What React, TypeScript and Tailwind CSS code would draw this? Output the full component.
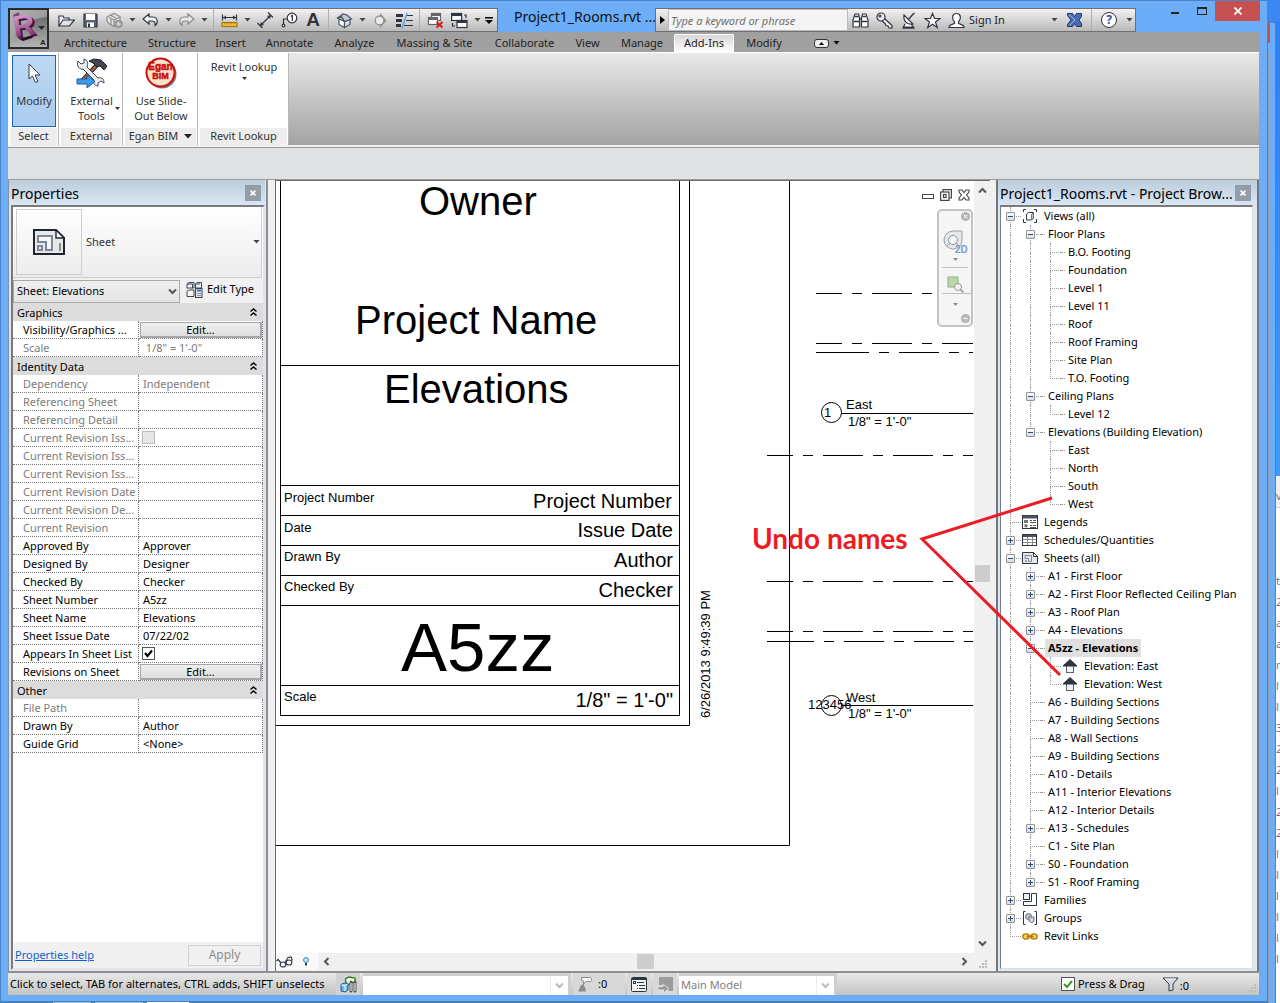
import type { ReactNode } from "react";

/* ---------- small shared parts ---------- */

function Caret({ dark = false }: { dark?: boolean }) {
  return (
    <svg width="7" height="4" viewBox="0 0 7 4" aria-hidden="true">
      <path d="M0.5 0h6L3.5 3.6z" fill={dark ? "#000" : "#444"} />
    </svg>
  );
}

function Chevron({ color = "#555", rotate = 0 }: { color?: string; rotate?: number }) {
  return (
    <svg width="9" height="9" viewBox="0 0 9 9" fill="none" stroke={color} strokeWidth="2" aria-hidden="true">
      <path d="M1 2.5l3.5 3.5L8 2.5" transform={`rotate(${rotate} 4.5 4.5)`} />
    </svg>
  );
}

function TinyArrow({ color = "#333" }: { color?: string }) {
  return (
    <svg width="5" height="3" viewBox="0 0 5 3" aria-hidden="true">
      <path d="M0 0h5L2.500 3z" fill={color} />
    </svg>
  );
}

function ToolButton({ label, children, wide = true }: { label: string; children: ReactNode; wide?: boolean }) {
  return (
    <button aria-label={label} className={wide ? "flex h-full w-6 items-center justify-center" : "flex h-full w-3 items-center justify-center"}>
      {children}
    </button>
  );
}

function MenuArrow({ label }: { label: string }) {
  return (
    <ToolButton label={label} wide={false}>
      <Caret />
    </ToolButton>
  );
}

function Separator() {
  return <span className="mx-[3px] h-full w-px bg-[#aeaeae]" />;
}

function Icon({ children, size = 17 }: { children: ReactNode; size?: number }) {
  return (
    <svg width={size} height={size} viewBox="0 0 17 17" fill="none" stroke="#2e3440" strokeWidth="1.2" aria-hidden="true">
      {children}
    </svg>
  );
}

function SheetIcon({ size }: { size: number }) {
  return (
    <svg width={size} height={(size * 26) / 32} viewBox="0 0 32 26" fill="none" aria-hidden="true">
      <path d="M1 1h22l8 8v16H1z" fill="#e6e8ea" stroke="#1f2530" strokeWidth="2" />
      <path d="M23 1v8h8z" fill="#fff" stroke="#1f2530" strokeWidth="1.4" />
      <path d="M5 7h14v14h-6v-8H5z" fill="#f4f6f8" stroke="#7c879c" strokeWidth="2" />
      <rect x="5" y="17" width="4" height="4" fill="#f4f6f8" stroke="#7c879c" strokeWidth="2" />
      <path d="M27 14v8" stroke="#8c8c8c" strokeWidth="2" />
    </svg>
  );
}

function PaneClose({ label }: { label: string }) {
  return (
    <button aria-label={label} className="flex h-4 w-4 items-center justify-center bg-[#929da8]">
      <svg width="6" height="6" viewBox="0 0 6 6" stroke="#fff" strokeWidth="1.6" aria-hidden="true">
        <path d="M0.5 0.5l5 5M5.5 0.5l-5 5" />
      </svg>
    </button>
  );
}

/* ---------- title bar ---------- */

function QuickAccess() {
  return (
    <div className="flex h-6 items-stretch border-y border-r border-[#6f6f6f] bg-linear-to-b from-[#f2f2f2] to-[#b9b9b9] pr-[2px] pl-[46px]">
      <ToolButton label="Open">
        <Icon>
          <path d="M1 14V4h4l1 2h5v3" fill="#fff" />
          <path d="M1 14l4-6h11.500l-5 6z" fill="#dfe3e8" />
        </Icon>
      </ToolButton>
      <ToolButton label="Save">
        <Icon>
          <path d="M2 2h12.500l.5.5V15H2z" fill="#5c6475" />
          <rect x="4" y="2" width="9" height="6" fill="#fff" stroke="none" />
          <rect x="5" y="10.500" width="7" height="4.500" fill="#fff" stroke="none" />
          <rect x="6" y="11.500" width="2" height="3.500" fill="#2e3440" stroke="none" />
        </Icon>
      </ToolButton>
      <ToolButton label="Synchronize">
        <Icon>
          <g stroke="#8e8e8e">
            <path d="M1 5l4-2 3-1.500 6 3v6l-6 4-5-3-2-2z" fill="#e4e4e4" />
            <path d="M8 15V8l6-3M8 8L3 5.500M4 3l6 3M5 13V7" />
            <circle cx="12.500" cy="12" r="3.500" fill="#a4a4a4" />
            <path d="M10.500 12h4M12.500 10v4" stroke="#e0e0e0" />
          </g>
        </Icon>
      </ToolButton>
      <MenuArrow label="Synchronize options" />
      <ToolButton label="Undo">
        <Icon>
          <path d="M7 2L1 7l6 5V9h3c2.500 0 3.500 1.500 3 4.500 3-1.500 3.500-8-2-8.500H7z" fill="#fff" />
        </Icon>
      </ToolButton>
      <MenuArrow label="Undo history" />
      <ToolButton label="Redo">
        <Icon>
          <path d="M10 2l6 5-6 5V9H7c-2.500 0-3.500 1.500-3 4.500C1 12 .5 5.500 6 5h4z" fill="#e8e8e8" stroke="#8a8a8a" />
        </Icon>
      </ToolButton>
      <MenuArrow label="Redo history" />
      <Separator />
      <ToolButton label="Measure">
        <Icon>
          <path d="M1.500 2.500v6M15.500 2.500v6M2 5.500h13" />
          <path d="M2 5.500l3-2v4zM15 5.500l-3-2v4z" fill="#2e3440" stroke="none" />
          <rect x="1" y="10.500" width="15" height="4" fill="#f5c242" stroke="#a87408" />
          <path d="M4 11v1.500M7 11v1.500M10 11v1.500M13 11v1.500" stroke="#a87408" strokeWidth="1" />
        </Icon>
      </ToolButton>
      <MenuArrow label="Measure options" />
      <ToolButton label="Aligned Dimension">
        <Icon>
          <path d="M3 14L14 3M0.500 11l5 5M11 .5l5 5" />
          <path d="M3 14l1-4 3 3zM14 3l-1 4-3-3z" fill="#2e3440" stroke="none" />
        </Icon>
      </ToolButton>
      <ToolButton label="Tag by Category">
        <Icon>
          <circle cx="11" cy="6" r="4.800" fill="#fff" />
          <path d="M11.300 9V3.500L9.800 4.600M6 7H2.500v6" />
          <circle cx="2.500" cy="13.500" r="1.300" fill="#fff" />
        </Icon>
      </ToolButton>
      <ToolButton label="Text">
        <span className="font-['Liberation_Sans',sans-serif] text-[19px] leading-5 font-bold text-[#343434]">A</span>
      </ToolButton>
      <Separator />
      <ToolButton label="Default 3D View">
        <Icon>
          <path d="M3 7v5.500l5.500 3V9.500z" fill="#fff" stroke="#4b5363" />
          <path d="M8.500 9.500v6l5.500-3V7z" fill="#d9dde2" stroke="#4b5363" />
          <path d="M1 6.500l6-4.500 4 1 4.500 4-7 2.500L5.500 5z" fill="#c3c8d0" stroke="#4b5363" />
          <path d="M1 6.500L5.500 5l3 4.500" stroke="#4b5363" />
        </Icon>
      </ToolButton>
      <MenuArrow label="3D view options" />
      <ToolButton label="Section">
        <Icon>
          <path d="M8 1l6.500 7.500L8 16z" fill="#8e8e8e" stroke="none" />
          <circle cx="7.500" cy="8.500" r="4.300" fill="#e8e8e8" stroke="#8e8e8e" />
        </Icon>
      </ToolButton>
      <ToolButton label="Thin Lines">
        <Icon>
          <path d="M0 3.500h7M0 8.500h6M0 13.500h5" strokeWidth="3" />
          <path d="M11 3.500h6M10 8.500h7M8 13.500h9" strokeWidth="1" />
          <path d="M11 1L6 16" stroke="#3b9bf0" />
        </Icon>
      </ToolButton>
      <Separator />
      <ToolButton label="Close Hidden Windows">
        <Icon>
          <g fill="#fff" stroke="#666">
            <rect x="4.500" y="1.500" width="9" height="7" />
            <rect x="1.500" y="5.500" width="9" height="7" />
            <path d="M2 7h8M5 3h8" strokeWidth="2" />
          </g>
          <path d="M9.500 10l6 5.500M15.500 10l-6 5.500" stroke="#cc1f1f" strokeWidth="2" />
        </Icon>
      </ToolButton>
      <ToolButton label="Switch Windows">
        <Icon>
          <g fill="#fff">
            <rect x=".6" y="1.500" width="10" height="7" />
            <rect x="6" y="8.500" width="10" height="7" />
            <path d="M1 3h9M6 10h10" strokeWidth="2" />
          </g>
          <path d="M13 3h2v3M1.500 11v3h2.500" />
        </Icon>
      </ToolButton>
      <MenuArrow label="Switch window list" />
      <ToolButton label="Customize Quick Access Toolbar" wide={false}>
        <svg width="8" height="7" viewBox="0 0 8 7" aria-hidden="true">
          <path d="M0 0h8v1.500H0zM0 3h8L4 7z" />
        </svg>
      </ToolButton>
    </div>
  );
}

function InfoCenter() {
  return (
    <div className="flex h-6 items-stretch border border-[#6f6f6f] bg-linear-to-b from-[#f2f2f2] to-[#b9b9b9]">
      <button aria-label="Collapse search" className="flex w-3 items-center justify-center">
        <svg width="5" height="8" viewBox="0 0 5 8" aria-hidden="true">
          <path d="M0 0l5 4-5 4z" />
        </svg>
      </button>
      <input
        aria-label="Search"
        placeholder="Type a keyword or phrase"
        className="w-[180px] border border-[#b9bcc4] bg-[#f4f4f4] px-[2px] pt-[3px] text-[11px] italic placeholder:text-[#6f6f6f]"
      />
      <ToolButton label="Search help">
        <Icon>
          <path d="M3 2h3.500l1 4v9H1V8zM14 2h-3.500l-1 4v9H16V8z" fill="#fff" />
          <path d="M1.500 9.500h5.500M10 9.500h5.500M7 7h3M3 4.500h3.500M10.500 4.500H14" strokeWidth="1.500" />
        </Icon>
      </ToolButton>
      <ToolButton label="Subscription">
        <Icon>
          <path d="M8 6l8 7.500V16h-3l-1-2-2-.5-1-2L6 9z" fill="#eee" />
          <circle cx="5" cy="5" r="4" fill="#eee" />
          <circle cx="4" cy="4" r="1" fill="#fff" />
        </Icon>
      </ToolButton>
      <ToolButton label="Communication Center">
        <Icon>
          <path d="M4 3c-1 6 3 10 9 9zM8.500 7.500L13 2M14.500 1l-2 2M5 12l-2 4h11l-3-4" fill="#fff" />
          <path d="M3 15.500h11" strokeWidth="2" />
        </Icon>
      </ToolButton>
      <ToolButton label="Favorites">
        <Icon>
          <path d="M8.500 1.500l2 5h5.500l-4.500 3.500 1.800 5.500-4.800-3.300-4.800 3.300L5.500 10 1 6.500h5.500z" fill="#fff" />
        </Icon>
      </ToolButton>
      <button className="flex w-[104px] items-center gap-1 pl-1 text-[11px] text-[#222]">
        <Icon>
          <path d="M1 15.500c0-3 3-3 5.500-4v-1.500C3 6 4.500 1.500 8.500 1.500S14 6 10.500 10v1.500c2.500 1 5.500 1 5.500 4z" fill="#fff" />
        </Icon>
        Sign In
      </button>
      <MenuArrow label="Account menu" />
      <button aria-label="Exchange Apps" className="flex w-7 items-center justify-center">
        <svg width="15" height="14" viewBox="0 0 15 14" aria-hidden="true">
          <path d="M.5.5h5l2 3 2-3h5v3L12 7l2.500 3.500v3h-5l-2-3-2 3h-5v-2L4 7 .5 2.500z" fill="#4a6bb5" stroke="#1f3768" />
          <path d="M2 1.500L8 7l-5.500 5.500" fill="none" stroke="#9db5e6" />
        </svg>
      </button>
      <Separator />
      <button aria-label="Help" className="flex w-7 items-center justify-center">
        <span className="flex h-4 w-4 items-center justify-center rounded-full border border-[#333] bg-white text-[12px] leading-3 font-bold text-[#2450a8]">?</span>
      </button>
      <MenuArrow label="Help menu" />
    </div>
  );
}

function TitleBar() {
  return (
    <header className="flex h-[31px] items-end">
      <div className="pl-2">
        <QuickAccess />
      </div>
      <h1 className="w-[157px] shrink-0 pb-[3px] pl-4 text-[14px] leading-6 whitespace-nowrap text-[#111]">Project1_Rooms.rvt ...</h1>
      <InfoCenter />
      <div className="ml-auto flex h-8 items-start pr-[7px] pt-px">
        <button aria-label="Minimize" className="flex h-5 w-[27px] items-center justify-center">
          <span className="mt-1 h-[2px] w-2 bg-[#222]" />
        </button>
        <button aria-label="Maximize" className="flex h-5 w-[27px] items-center justify-center">
          <span className="h-2 w-[10px] border border-t-2 border-[#222]" />
        </button>
        <button aria-label="Close" className="flex h-5 w-[45px] items-center justify-center bg-[#c75050]">
          <svg width="8" height="8" viewBox="0 0 8 8" stroke="#fff" strokeWidth="1.800" aria-hidden="true">
            <path d="M.5.5l7 7M7.500.5l-7 7" />
          </svg>
        </button>
      </div>
    </header>
  );
}

function AppMenu() {
  return (
    <button aria-label="Application menu" className="absolute top-[7px] left-[7px] h-[41px] w-[41px] border-2 border-[#2b2b2b] bg-linear-to-br from-[#b4b4b4] to-[#8a8a8a]">
      <svg width="37" height="37" viewBox="0 0 37 37" aria-hidden="true">
        <defs>
          <linearGradient id="brand" x1="0" y1="0" x2="0" y2="1">
            <stop offset="0" stopColor="#e0b4d8" />
            <stop offset="0.600" stopColor="#a8639c" />
            <stop offset="1" stopColor="#5a1a4c" />
          </linearGradient>
          <linearGradient id="gloss" x1="0" y1="0" x2="0" y2="1">
            <stop offset="0" stopColor="#6d6d6d" />
            <stop offset="1" stopColor="#b4b4b4" />
          </linearGradient>
        </defs>
        <path d="M0 37C2 22 16 9 37 7v30z" fill="url(#gloss)" />
        <path d="M3 5l6-3 3 25-4 2z" fill="#7d4273" />
        <path d="M9 29l17-5-4 4-9 3z" fill="#2a0c24" />
        <text x="5" y="28" fontSize="30" fontWeight="bold" fontFamily="Liberation Sans, sans-serif" fill="#4b1240" transform="rotate(-9 12 16)">R</text>
        <text x="3" y="26" fontSize="30" fontWeight="bold" fontFamily="Liberation Sans, sans-serif" fill="url(#brand)" transform="rotate(-9 12 16)">R</text>
        <path d="M28 16h7l-3.500 4z" fill="#222c3a" />
        <text x="30" y="35" fontSize="8" fontWeight="bold" fontFamily="Liberation Sans, sans-serif" fill="#222">A</text>
      </svg>
    </button>
  );
}

/* ---------- ribbon ---------- */

const tabs: { name: string; width: string; active?: boolean }[] = [
  { name: "Architecture", width: "w-[85px]" },
  { name: "Structure", width: "w-[68px]" },
  { name: "Insert", width: "w-[49px]" },
  { name: "Annotate", width: "w-[69px]" },
  { name: "Analyze", width: "w-[61px]" },
  { name: "Massing & Site", width: "w-[99px]" },
  { name: "Collaborate", width: "w-[81px]" },
  { name: "View", width: "w-[45px]" },
  { name: "Manage", width: "w-[64px]" },
  { name: "Add-Ins", width: "w-[60px]", active: true },
  { name: "Modify", width: "w-[60px]" },
];

function RibbonTabs() {
  return (
    <nav aria-label="Ribbon tabs" className="flex h-5 items-end bg-[#a0a0a0] pl-[45px] text-[11px] text-[#222]">
      {tabs.map((t) => (
        <button
          key={t.name}
          className={`${t.width} h-[18px] pb-[2px] text-center leading-[15px] whitespace-nowrap ${t.active ? "rounded-t-[2px] border border-b-0 border-white bg-linear-to-b from-[#d8d8d8] to-white" : ""}`}
        >
          {t.name}
        </button>
      ))}
      <button aria-label="Minimize ribbon" className="ml-5 flex h-[18px] items-center gap-1">
        <span className="flex h-[9px] w-[15px] items-center justify-center rounded-[3px] border border-[#333] bg-[#eee]">
          <svg width="5" height="3" viewBox="0 0 5 3" aria-hidden="true">
            <path d="M2.500 0L5 3H0z" />
          </svg>
        </span>
        <Caret dark />
      </button>
    </nav>
  );
}

function RibbonPanel({ title, width, arrow, children }: { title: string; width: string; arrow?: boolean; children: ReactNode }) {
  return (
    <section className={`${width} flex shrink-0 flex-col border-r border-[#b8b8b8] bg-white pl-[2px]`}>
      <div className="flex flex-1 flex-col items-center pt-[2px]">{children}</div>
      <h2 className="mr-px flex h-[17px] items-center justify-center gap-[6px] bg-[#ededed] text-[11px] whitespace-nowrap text-[#333]">
        {title}
        {arrow && (
          <svg width="8" height="5" viewBox="0 0 8 5" aria-hidden="true">
            <path d="M0 0h8L4 4.500z" fill="#222" />
          </svg>
        )}
      </h2>
    </section>
  );
}

function Ribbon() {
  return (
    <div className="flex h-[93px] border-t border-white bg-linear-to-b from-[#e9e9e9] to-[#a3a3a3] text-[#333]">
      <RibbonPanel title="Select" width="w-[51px]">
        <button className="flex h-[72px] w-11 flex-col items-center border border-[#1c65b8] bg-linear-to-b from-[#bcd8f3] to-[#aaccee] pt-[7px] text-[11px]">
          <svg width="13" height="21" viewBox="0 0 13 21" aria-hidden="true">
            <path d="M1 1v15l3.500-3 3 6.500 2.500-1.200-3-6.300H12z" fill="#fff" stroke="#333a48" />
          </svg>
          <span className="mt-[9px] leading-[15px]">Modify</span>
        </button>
      </RibbonPanel>
      <RibbonPanel title="External" width="w-[64px]">
        <button className="relative flex flex-col items-center pt-[2px] text-[11px] leading-[15px]">
          <svg width="32" height="32" viewBox="0 0 32 32" fill="none" aria-hidden="true">
            <path d="M20 9L5 25" stroke="#3c241c" strokeWidth="4.500" />
            <path d="M20 9L5 25" stroke="#a0644c" strokeWidth="2.500" />
            <path d="M13 4l5-2 7 1 6 6-3 4-4-4-3 1-4-4z" fill="#41454d" stroke="#1e2228" />
            <path d="M2 4l3 3 3-1 0-4c4 1 4 5 3 8l11 11c4-1 6 1 6 5l-3-2-3 2 0 3c-4 0-5-4-4-6L7 12c-3 1-7-3-5-8z" fill="#e9ecf0" stroke="#3c4350" />
            <path d="M1 22h10v-4l8 6.500-8 6.500v-4H1z" fill="#3d9ae6" stroke="#1c5da2" />
          </svg>
          <span className="mt-1">External</span>
          <span>Tools</span>
          <span className="absolute right-[-7px] bottom-[13px]">
            <TinyArrow />
          </span>
        </button>
      </RibbonPanel>
      <RibbonPanel title="Egan BIM" width="w-[75px]" arrow>
        <button className="flex flex-col items-center pt-[2px] text-[11px] leading-[15px]">
          <svg width="32" height="32" viewBox="0 0 32 32" aria-hidden="true">
            <circle cx="17" cy="17" r="14.500" fill="#777" />
            <circle cx="15.500" cy="15.500" r="14" fill="#ffe3c8" stroke="#c8100c" strokeWidth="2" />
            <text x="15.500" y="13" textAnchor="middle" fontSize="10" fontWeight="900" fontFamily="Liberation Sans, sans-serif" fill="#c8100c" stroke="#c8100c" strokeWidth="0.500">Egan</text>
            <text x="15.500" y="22" textAnchor="middle" fontSize="9" fontWeight="900" fontFamily="Liberation Sans, sans-serif" fill="#c8100c" stroke="#c8100c" strokeWidth="0.500">BIM</text>
          </svg>
          <span className="mt-1">Use Slide-</span>
          <span>Out Below</span>
        </button>
      </RibbonPanel>
      <RibbonPanel title="Revit Lookup" width="w-[91px]">
        <button className="flex flex-col items-center gap-[3px] pt-[4px] text-[11px] leading-[15px]">
          Revit Lookup
          <TinyArrow />
        </button>
      </RibbonPanel>
    </div>
  );
}

/* ---------- properties palette ---------- */

type Prop = { name: string; value?: string; muted?: boolean; kind?: "group" | "button" | "check" | "checked" };

const properties: Prop[] = [
  { name: "Graphics", kind: "group" },
  { name: "Visibility/Graphics ...", kind: "button" },
  { name: "Scale", value: " 1/8\" = 1'-0\"", muted: true },
  { name: "Identity Data", kind: "group" },
  { name: "Dependency", value: "Independent", muted: true },
  { name: "Referencing Sheet", muted: true },
  { name: "Referencing Detail", muted: true },
  { name: "Current Revision Iss...", muted: true, kind: "check" },
  { name: "Current Revision Iss...", muted: true },
  { name: "Current Revision Iss...", muted: true },
  { name: "Current Revision Date", muted: true },
  { name: "Current Revision De...", muted: true },
  { name: "Current Revision", muted: true },
  { name: "Approved By", value: "Approver" },
  { name: "Designed By", value: "Designer" },
  { name: "Checked By", value: "Checker" },
  { name: "Sheet Number", value: "A5zz" },
  { name: "Sheet Name", value: "Elevations" },
  { name: "Sheet Issue Date", value: "07/22/02" },
  { name: "Appears In Sheet List", kind: "checked" },
  { name: "Revisions on Sheet", kind: "button" },
  { name: "Other", kind: "group" },
  { name: "File Path", muted: true },
  { name: "Drawn By", value: "Author" },
  { name: "Guide Grid", value: "<None>" },
];

function PropertyValue({ p }: { p: Prop }) {
  if (p.kind === "button")
    return (
      <button aria-label={`Edit ${p.name}`} className="ml-px block h-[16px] w-[calc(100%-1px)] border border-r-2 border-b-2 border-[#a6a6a6] bg-linear-to-b from-[#efefef] to-[#dedede] text-center leading-[13px]">
        Edit...
      </button>
    );
  if (p.kind === "check" || p.kind === "checked")
    return (
      <span className="relative ml-[3px] block h-[13px] w-[13px]">
        <input
          type="checkbox"
          aria-label={p.name}
          defaultChecked={p.kind === "checked"}
          disabled={p.kind === "check"}
          className="block h-[13px] w-[13px] appearance-none border border-[#555] bg-white disabled:border-[#bdbdbd] disabled:bg-[#e6e6e6]"
        />
        {p.kind === "checked" && (
          <svg className="pointer-events-none absolute inset-0" width="13" height="13" viewBox="0 0 13 13" fill="none" stroke="#000" strokeWidth="2.200" aria-hidden="true">
            <path d="M3 6l2.500 3L10 3.500" />
          </svg>
        )}
      </span>
    );
  return <span className="block truncate pl-1 whitespace-pre">{p.value}</span>;
}

function PropertiesPalette() {
  return (
    <aside className="flex w-[260px] shrink-0 flex-col border-r-2 border-l border-[#8490a0] bg-[#dbe7f4] pr-px">
      <div className="flex h-[25px] items-center justify-between bg-linear-to-b from-[#bccddb] to-[#dae6f4] pt-px pr-1 pl-[2px]">
        <h2 className="text-[14px]">Properties</h2>
        <PaneClose label="Close properties" />
      </div>
      <div className="ml-[2px] flex flex-1 flex-col border-2 border-t-[#7a7a7a] border-r-[#e4e4e4] border-b-[#e4e4e4] border-l-[#7a7a7a] bg-white">
        <button className="mr-px flex h-[71px] items-center border-r border-b border-[#cfcfcf] bg-linear-to-b from-white to-[#ececec] pl-[3px] text-left text-[11px] text-[#333]">
          <span className="flex h-[66px] w-[66px] items-center justify-center border border-[#cfcfcf]">
            <SheetIcon size={32} />
          </span>
          <span className="flex-1 pl-1">Sheet</span>
          <Caret />
          <span className="w-px" />
        </button>
        <div className="flex h-[25px] items-stretch bg-[#f0f0f0] text-[11px]">
          <label className="relative mt-px flex w-[167px] items-center">
            <select aria-label="Instance" className="h-[23px] w-full appearance-none border border-[#a9a9a9] bg-linear-to-b from-[#efefef] to-[#e4e4e4] pl-[3px]">
              <option>Sheet: Elevations</option>
            </select>
            <span className="pointer-events-none absolute right-[3px]">
              <Chevron />
            </span>
          </label>
          <button className="flex items-center gap-1 pb-[2px] pl-[6px]">
            <svg width="17" height="17" viewBox="0 0 17 17" fill="none" stroke="#3c4452" aria-hidden="true">
              <path d="M1 3l2-1.500h5V7H1zM9.500 3l1.500-1.500h4.500V7h-6zM1 10.500L3 9h5v6.500H1zM1 3h5.500v4M9 3h5" fill="#f4f6f8" />
              <rect x="9.500" y="7.500" width="6.500" height="9" fill="#e3e6ea" />
              <path d="M11 9.500h4" stroke="#2f74c8" strokeWidth="2" />
              <path d="M11.500 12.500h1M13.500 12.500h1M11.500 14.500h1M13.500 14.500h1" />
            </svg>
            Edit Type
          </button>
        </div>
        <table className="w-full table-fixed border-separate border-spacing-0 text-[11px]">
          <colgroup>
            <col className="w-[126px]" />
            <col />
          </colgroup>
          <tbody>
            {properties.map((p, i) =>
              p.kind === "group" ? (
                <tr key={i} className="h-[18px] bg-[#dcdcdc] text-left">
                  <th colSpan={2} scope="rowgroup" className="p-0 font-normal">
                    <span className="flex items-center justify-between pr-[6px] pl-1 leading-[17px]">
                      {p.name}
                      <svg width="7" height="8" viewBox="0 0 7 8" fill="none" stroke="#000" strokeWidth="1.400" aria-hidden="true">
                        <path d="M.5 3.500l3-2.500 3 2.500M.5 7.500l3-2.500 3 2.500" />
                      </svg>
                    </span>
                  </th>
                </tr>
              ) : (
                <tr key={i} className={`h-[18px] ${p.muted ? "text-[#7b7b7b]" : "text-black"}`}>
                  <th scope="row" className="overflow-hidden border-r border-b border-dotted border-[#7a7a7a] p-0 pl-[10px] text-left leading-[16px] font-normal whitespace-nowrap">
                    {p.name}
                  </th>
                  <td className="border-r border-b border-dotted border-[#7a7a7a] p-0 leading-[16px]">
                    <PropertyValue p={p} />
                  </td>
                </tr>
              ),
            )}
          </tbody>
        </table>
        <div className="mt-auto flex h-[26px] items-center justify-between bg-[#f0f0f0] pr-[2px] pl-[2px] text-[11px]">
          <a href="#help" className="text-[#0a62cf] underline">
            Properties help
          </a>
          <button disabled className="h-[21px] w-[73px] border border-[#d0d0d0] text-[12px] leading-[18px] text-[#8b8b8b]">
            Apply
          </button>
        </div>
      </div>
      <div className="h-px" />
    </aside>
  );
}

/* ---------- drawing area ---------- */

const dashA = "M816 293.500h26m10 0h10m10 0h40m10 0h10m10 0h31";
const dashB = "M816 343.500h26m10 0h10m10 0h40m10 0h10m10 0h31";
const dashC = "M816 352.500h53m10 0h10m10 0h40m10 0h10m10 0h4";
const dashD = "h26m10 0h10m10 0h40m10 0h10m10 0h40m10 0h10m10 0h10";
const dashE = "M767 641.500h47m10 0h10m10 0h40m10 0h10m10 0h40m10 0h9";

function SheetDrawing() {
  return (
    <svg width="697" height="771" viewBox="276 181 697 771" className="shrink-0" fontFamily="Liberation Sans, Arial, sans-serif" role="img" aria-label="Sheet A5zz">
      <g fill="none" stroke="#000">
        <path d="M280.500 181v535M679.500 181v535M689.500 181v544.500H276M789.500 181v664.500H276" />
        <path d="M280 365.500h400M280 485.500h400M280 515.500h400M280 545.500h400M280 575.500h400M280 605.500h400M280 685.500h400M280 715.500h400" />
        <path d={`${dashA}${dashB}${dashC}${dashE}`} />
        <path d={`M767 455.500${dashD}M767 581.500${dashD}M767 631.500${dashD}`} />
        <circle cx="831.500" cy="412.500" r="10" />
        <circle cx="831.500" cy="705.500" r="10" />
        <path d="M841 413.500h132M841 705.500h132" />
      </g>
      <g fontSize="40">
        <text x="419" y="215">Owner</text>
        <text x="355" y="334">Project Name</text>
        <text x="384" y="403">Elevations</text>
      </g>
      <text x="401" y="671" fontSize="69">A5zz</text>
      <g fontSize="20" textAnchor="end">
        <text x="672" y="508">Project Number</text>
        <text x="673" y="537">Issue Date</text>
        <text x="673" y="567">Author</text>
        <text x="673" y="597">Checker</text>
        <text x="673" y="707">1/8" = 1'-0"</text>
      </g>
      <g fontSize="13">
        <text x="284" y="502">Project Number</text>
        <text x="284" y="532">Date</text>
        <text x="284" y="561">Drawn By</text>
        <text x="284" y="591">Checked By</text>
        <text x="284" y="701">Scale</text>
        <text x="824" y="417">1</text>
        <text x="846" y="409">East</text>
        <text x="848" y="426">1/8" = 1'-0"</text>
        <text x="808" y="709">123456</text>
        <text x="846" y="702">West</text>
        <text x="848" y="718">1/8" = 1'-0"</text>
        <text transform="translate(710 718) rotate(-90)">6/26/2013 9:49:39 PM</text>
      </g>
    </svg>
  );
}

function ViewWindowButtons() {
  return (
    <div className="absolute top-2 right-1 flex items-center gap-[6px]">
      <button aria-label="Minimize view" className="flex h-3 w-3 items-center">
        <span className="mt-[3px] h-[5px] w-3 border border-[#444]" />
      </button>
      <button aria-label="Restore view">
        <svg width="12" height="12" viewBox="0 0 12 12" fill="none" stroke="#444" strokeWidth="1.200" aria-hidden="true">
          <path d="M3 3V.6h8.400v8.400H9" />
          <rect x=".6" y="3" width="8.400" height="8.400" />
          <rect x="3.500" y="5.500" width="2.500" height="3" />
        </svg>
      </button>
      <button aria-label="Close view">
        <svg width="12" height="12" viewBox="0 0 12 12" fill="none" stroke="#444" strokeWidth="1.100" aria-hidden="true">
          <path d="M1 1h3l2 2.500L8 1h3v2L8.500 6 11 9v2H8L6 8.500 4 11H1V9l2.500-3L1 3z" />
        </svg>
      </button>
    </div>
  );
}

function NavigationBar() {
  return (
    <div className="absolute top-7 right-px flex h-[118px] w-9 flex-col items-center rounded-[5px] border-2 border-[#c3c3c3] bg-[#f2f2f2]/80">
      <button aria-label="Close navigation bar" className="mt-px mr-px self-end">
        <svg width="9" height="9" viewBox="0 0 9 9" aria-hidden="true">
          <circle cx="4.500" cy="4.500" r="4" fill="#bcbcbc" stroke="#a8a8a8" />
          <path d="M3 3l3 3M6 3L3 6" stroke="#fff" />
        </svg>
      </button>
      <button aria-label="2D steering wheel" className="mt-[9px]">
        <svg width="25" height="24" viewBox="0 0 25 24" aria-hidden="true">
          <path d="M10 1h9v9a9 9 0 1 1-9-9z" fill="#e4e6ea" stroke="#9aa0aa" />
          <circle cx="10" cy="10" r="4.500" fill="#f6f6f6" stroke="#8e95a0" />
          <path d="M7 13l-3 3M13 13l3 3" stroke="#9aa0aa" />
          <text x="12" y="23" fontSize="10" fontWeight="bold" fontFamily="Liberation Sans, sans-serif" fill="#7d9dc8">2D</text>
        </svg>
      </button>
      <span className="mt-[2px] flex h-[7px] items-center">
        <TinyArrow color="#8c8c8c" />
      </span>
      <span className="mt-1 h-px w-[26px] bg-[#c3c3c3]" />
      <button aria-label="Zoom region" className="mt-2">
        <svg width="17" height="17" viewBox="0 0 17 17" fill="none" aria-hidden="true">
          <rect x="1" y="1" width="10" height="10" fill="#bcd5ab" stroke="#8db477" />
          <circle cx="11" cy="11" r="3.500" fill="#f2f2f2" stroke="#999" />
          <path d="M13.500 13.500l3 3" stroke="#999" strokeWidth="1.600" />
        </svg>
      </button>
      <span className="mt-2 flex h-[7px] items-center">
        <TinyArrow color="#8c8c8c" />
      </span>
      <button aria-label="Customize navigation bar" className="mt-auto mr-px mb-[2px] self-end">
        <svg width="9" height="9" viewBox="0 0 9 9" aria-hidden="true">
          <circle cx="4.500" cy="4.500" r="4" fill="#bcbcbc" stroke="#a8a8a8" />
          <path d="M2.500 4.500h4" stroke="#fff" />
        </svg>
      </button>
    </div>
  );
}

function Grip() {
  return (
    <svg width="9" height="9" viewBox="0 0 9 9" fill="#bdbdbd" aria-hidden="true">
      <path d="M6 0h2v2H6zM3 3h2v2H3zM6 3h2v2H6zM0 6h2v2H0zM3 6h2v2H3zM6 6h2v2H6z" />
    </svg>
  );
}

function DrawingArea() {
  return (
    <main className="ml-[7px] flex min-w-0 flex-1 flex-col border-t border-l border-[#6c6c6c] bg-[#f0f0f0]">
      <div className="flex flex-1">
        <div className="relative flex min-w-0 flex-1 items-start overflow-hidden bg-white">
          <SheetDrawing />
          <ViewWindowButtons />
          <NavigationBar />
        </div>
        <div className="flex w-4 flex-col items-center justify-between bg-[#f0f0f0] py-[5px]">
          <Chevron rotate={180} />
          <span className="mt-[12px] h-[17px] w-[15px] bg-[#cdcdcd]" />
          <Chevron />
        </div>
      </div>
      <div className="flex h-[17px] items-center bg-[#f0f0f0]">
        <div className="flex h-full w-[42px] items-center gap-[10px] bg-white/60">
          <svg width="17" height="12" viewBox="0 0 17 12" fill="none" stroke="#333a48" strokeWidth="1.200" aria-hidden="true">
            <path d="M0.500 5l1.500-1.500L5 7M9 6.500l3-5 3-.5 1.500 3.500" />
            <ellipse cx="7" cy="8.500" rx="2.800" ry="2.500" fill="#fff" />
            <ellipse cx="13" cy="6.500" rx="2.800" ry="2.500" fill="#fff" />
          </svg>
          <svg width="6" height="9" viewBox="0 0 6 9" aria-hidden="true">
            <circle cx="3" cy="3" r="2.400" fill="#d6ecff" stroke="#2778cc" />
            <path d="M2 6h2v2.500H2z" fill="#333a48" />
          </svg>
        </div>
        <span className="pl-1">
          <Chevron rotate={90} />
        </span>
        <span className="flex flex-1 justify-center">
          <span className="h-[15px] w-[17px] bg-[#cdcdcd]" />
        </span>
        <Chevron rotate={270} />
        <span className="pt-[6px] pr-[2px] pl-[10px]">
          <Grip />
        </span>
      </div>
      <div className="h-px" />
    </main>
  );
}

/* ---------- project browser ---------- */

type IconName = "views" | "legends" | "schedules" | "sheets" | "families" | "groups" | "links" | "house";
type Node = { name: string; icon?: IconName; open?: boolean; closed?: boolean; bold?: boolean; children?: Node[] };

const leaf = (name: string): Node => ({ name });
const shut = (name: string): Node => ({ name, closed: true });

const tree: Node[] = [
  {
    name: "Views (all)",
    icon: "views",
    open: true,
    children: [
      {
        name: "Floor Plans",
        open: true,
        children: ["B.O. Footing", "Foundation", "Level 1", "Level 11", "Roof", "Roof Framing", "Site Plan", "T.O. Footing"].map(leaf),
      },
      { name: "Ceiling Plans", open: true, children: [leaf("Level 12")] },
      { name: "Elevations (Building Elevation)", open: true, children: ["East", "North", "South", "West"].map(leaf) },
    ],
  },
  { name: "Legends", icon: "legends" },
  { name: "Schedules/Quantities", icon: "schedules", closed: true },
  {
    name: "Sheets (all)",
    icon: "sheets",
    open: true,
    children: [
      shut("A1 - First Floor"),
      shut("A2 - First Floor Reflected Ceiling Plan"),
      shut("A3 - Roof Plan"),
      shut("A4 - Elevations"),
      {
        name: "A5zz - Elevations",
        open: true,
        bold: true,
        children: [
          { name: "Elevation: East", icon: "house" },
          { name: "Elevation: West", icon: "house" },
        ],
      },
      leaf("A6 - Building Sections"),
      leaf("A7 - Building Sections"),
      leaf("A8 - Wall Sections"),
      leaf("A9 - Building Sections"),
      leaf("A10 - Details"),
      leaf("A11 - Interior Elevations"),
      leaf("A12 - Interior Details"),
      shut("A13 - Schedules"),
      leaf("C1 - Site Plan"),
      shut("S0 - Foundation"),
      shut("S1 - Roof Framing"),
    ],
  },
  { name: "Families", icon: "families", closed: true },
  { name: "Groups", icon: "groups", closed: true },
  { name: "Revit Links", icon: "links" },
];

function TreeIcon({ name }: { name: IconName }) {
  const dark = "#2e3440";
  return (
    <svg width="16" height="16" viewBox="0 0 16 16" fill="none" stroke={dark} aria-hidden="true">
      {name === "views" && (
        <>
          <path d="M4 1.500H1.500V4M12 1.500h2.500V4M1.500 11v3.500H4M14.500 11v3.500H12" />
          <path d="M4.500 6l2-1.500h5v5.500l-2 2h-5z" fill="#fff" />
          <path d="M9.500 6.500v5.500l2-2V4.500z" fill="#b5bcc7" stroke="#6d7584" />
        </>
      )}
      {name === "legends" && (
        <>
          <rect x=".5" y="1.500" width="15" height="13" fill="#fff" />
          <path d="M1 3h14" strokeWidth="3" stroke="#4b5363" />
          <rect x="2.500" y="6.500" width="3" height="2" fill="#777" stroke="#777" />
          <circle cx="4" cy="11.800" r="1.300" fill="#777" stroke="#777" />
          <path d="M8 6.500h2m1 0h3M8 8.500h6M8 11.500h2m1 0h3M8 13.500h6" stroke="#555" />
        </>
      )}
      {name === "schedules" && (
        <>
          <rect x=".5" y="2.500" width="14" height="11" fill="#fff" />
          <path d="M1 4h13" strokeWidth="2" stroke="#4b5363" />
          <path d="M5.500 5v8M1 7.500h13M1 10.500h13M10.500 5v8" stroke="#8a8a8a" />
        </>
      )}
      {name === "sheets" && (
        <>
          <path d="M.5 2.500h11l4 4v7H.5z" fill="#e6e8ea" />
          <path d="M11.500 2.500v4h4z" fill="#fff" />
          <path d="M3 5.500h6.500v6H6.500v-3H3zM3.500 10.500h1v1h-1z" stroke="#7c879c" />
        </>
      )}
      {name === "families" && (
        <>
          <rect x="1.500" y="1.500" width="6" height="6" fill="#eceef1" />
          <path d="M9.500 1.500h5v12h-13v-4h8z" fill="#fff" />
        </>
      )}
      {name === "groups" && (
        <>
          <path d="M3.500 1.500h-2v13h2M12.500 1.500h2v13h-2" />
          <circle cx="6.500" cy="6.500" r="3" fill="#b9bfca" stroke="#6d7584" />
          <path d="M7 7h5v4l-2 2-3-2z" fill="#d2d6de" stroke="#6d7584" />
        </>
      )}
      {name === "links" && (
        <g stroke="#b57d09" strokeWidth="1.400">
          <ellipse cx="4" cy="8.500" rx="3.200" ry="2.600" fill="#f6d35f" />
          <ellipse cx="12" cy="8.500" rx="3.200" ry="2.600" fill="#f6d35f" />
          <path d="M4.500 8.500h7" strokeWidth="2" />
        </g>
      )}
      {name === "house" && (
        <>
          <rect x="4.500" y="7.500" width="7" height="7" fill="#eef0f2" stroke="#5a6170" />
          <path d="M8 1.500l7 6.500H1z" fill={dark} stroke={dark} />
        </>
      )}
    </svg>
  );
}

function Guide({ line, branch, last }: { line: boolean; branch?: boolean; last?: boolean }) {
  return (
    <span className="flex h-[18px] w-5 shrink-0 flex-col pl-[9px]">
      <span className={`h-[10px] border-dotted border-[#9a9a9a] ${line || branch ? "border-l" : ""} ${branch ? "border-b" : ""}`} />
      <span className={`h-2 border-dotted border-[#9a9a9a] ${line && !last ? "border-l" : ""}`} />
    </span>
  );
}

function TreeRow({ node, guides, last }: { node: Node; guides: boolean[]; last: boolean }) {
  const toggles = node.open || node.closed;
  return (
    <div className="flex h-[18px] items-center">
      {guides.map((g, i) => (
        <Guide key={i} line={g} />
      ))}
      <span className="relative flex">
        <Guide line branch last={last} />
        {toggles && (
          <button aria-label={`${node.open ? "Collapse" : "Expand"} ${node.name}`} className="absolute top-[5px] left-[5px] h-[9px] w-[9px] rounded-[1px] border border-[#919191] bg-linear-to-b from-white to-[#dcdcdc]">
            <svg width="7" height="7" viewBox="0 0 7 7" stroke="#2b4a8c" aria-hidden="true">
              <path d={node.open ? "M1 3.500h5" : "M1 3.500h5M3.500 1v5"} />
            </svg>
          </button>
        )}
      </span>
      {node.icon ? (
        <span className="mr-[6px] ml-px">
          <TreeIcon name={node.icon} />
        </span>
      ) : (
        <span className="mt-px h-px w-1 border-t border-dotted border-[#9a9a9a]" />
      )}
      <span className={`h-[18px] leading-[17px] whitespace-nowrap ${node.bold ? "bg-[#e0e0e0] px-[3px] font-bold" : node.icon ? "" : "pl-[3px]"}`}>{node.name}</span>
    </div>
  );
}

function TreeLevel({ nodes, guides }: { nodes: Node[]; guides: boolean[] }) {
  return (
    <ul>
      {nodes.map((n, i) => {
        const last = i === nodes.length - 1;
        return (
          <li key={n.name}>
            <TreeRow node={n} guides={guides} last={last} />
            {n.children && <TreeLevel nodes={n.children} guides={[...guides, !last]} />}
          </li>
        );
      })}
    </ul>
  );
}

function ProjectBrowser() {
  return (
    <aside className="ml-[6px] flex w-[263px] shrink-0 flex-col border-r-2 border-l-2 border-[#707780] bg-[#dbe7f4]">
      <div className="flex h-[25px] items-center justify-between bg-linear-to-b from-[#bccddb] to-[#dae6f4] pt-px pr-[6px] pl-[2px]">
        <h2 className="text-[14px] whitespace-nowrap">Project1_Rooms.rvt - Project Brow...</h2>
        <PaneClose label="Close project browser" />
      </div>
      <div className="mr-1 mb-[2px] ml-[2px] flex-1 overflow-hidden border-t-2 border-r border-b border-l border-[#dcdcdc] border-t-[#7a7a7a] border-l-[#7a7a7a] bg-white text-[11px]">
        <TreeLevel nodes={tree} guides={[]} />
      </div>
    </aside>
  );
}

/* Red mark-up pointing from the note to the two browser entries */
function Callout() {
  return (
    <svg className="pointer-events-none absolute top-[301px] right-[189px]" width="320" height="210" viewBox="750 481 320 210" aria-hidden="true">
      <path d="M1052 498L922 539l138 136" fill="none" stroke="#ed1c24" strokeWidth="3" />
      <text x="752" y="549" fontSize="28" fontWeight="bold" fontFamily="Lato, sans-serif" fill="#ed1c24">
        Undo names
      </text>
    </svg>
  );
}

/* ---------- status bar ---------- */

function StatusSelect({ label, width, value }: { label: string; width: string; value: string }) {
  return (
    <label className={`relative flex items-center border-t-[3px] border-r-[3px] border-[#cfcfcf] bg-white ${width}`}>
      <select aria-label={label} disabled className="h-full w-full appearance-none bg-white pl-[2px] text-[#808080]">
        <option>{value}</option>
      </select>
      <span className="pointer-events-none absolute right-0 flex h-full items-center border-l border-[#ececec] px-[4px]">
        <Chevron color="#bababa" />
      </span>
    </label>
  );
}

function StatusBar() {
  return (
    <footer className="flex h-6 items-stretch border-t-2 border-[#8f8f8f] bg-linear-to-b from-[#e8e8e8] to-[#c4c4c4] text-[11px] text-black">
      <p className="w-[328px] shrink-0 pl-[2px] leading-[21px] whitespace-nowrap">Click to select, TAB for alternates, CTRL adds, SHIFT unselects</p>
      <button aria-label="Worksets" className="flex w-6 items-center justify-center bg-[#d2d2d2]">
        <svg width="17" height="17" viewBox="0 0 17 17" fill="none" aria-hidden="true">
          <path d="M5.500 5V3L9 1l6 1v4l-4 1-3 2z" fill="#f2faee" stroke="#2f7d1c" strokeWidth="1.400" />
          <path d="M1 8.500L4 7l4 .5V14l-3 2-4-1z" fill="#6cb6ee" stroke="#1f5c94" />
          <path d="M1.500 9L5 9.500V15M5 9.500L7.500 8" stroke="#fff" />
          <path d="M11 6v9M15 6v9" stroke="#555" strokeWidth="3" strokeLinecap="round" />
          <path d="M11 7v8M15 7v8" stroke="#fff" />
        </svg>
      </button>
      <span className="w-[3px]" />
      <StatusSelect label="Active workset" width="w-[208px]" value="" />
      <button className="ml-[2px] flex w-[52px] items-center gap-[5px] bg-[#d8d8d8] pl-1">
        <svg width="16" height="16" viewBox="0 0 16 16" aria-hidden="true">
          <path d="M4.500 1.500h9l1 1v2l-1 1H9L6 9l1-3.500-2.500-1z" fill="#f2f2f2" stroke="#8c8c8c" />
          <path d="M1 15.500l2-4 1-2.500h2.500L8 11l1 4.500z" fill="#8c8c8c" />
        </svg>
        :0
      </button>
      <button aria-label="Design options" className="ml-[2px] flex w-6 items-center justify-center bg-[#d8d8d8]">
        <svg width="17" height="17" viewBox="0 0 17 17" fill="none" stroke="#2e3440" aria-hidden="true">
          <rect x=".5" y="1.500" width="15" height="14" rx="1" fill="#f3f4f5" />
          <path d="M1 3h15" strokeWidth="2" />
          <rect x="2.500" y="5.500" width="2" height="2" />
          <path d="M6 6.500h7M6 9.500h1m1 0h6M6 12.500h1m1 0h6" />
        </svg>
      </button>
      <button aria-label="Add to set" className="mr-[2px] ml-[2px] flex w-6 items-center justify-center bg-[#d8d8d8]">
        <svg width="17" height="17" viewBox="0 0 17 17" aria-hidden="true">
          <path d="M2 1h14v14h-4l-5-6H2z" fill="#9c9c9c" />
          <path d="M1 10.500h5V8l6 4.500L6.500 17v-3H1z" fill="#9c9c9c" stroke="#eee" strokeWidth="0.800" />
        </svg>
      </button>
      <StatusSelect label="Design option" width="w-[158px]" value="Main Model" />
      <label className="ml-auto flex items-center gap-[3px]">
        <span className="relative block h-[14px] w-[14px]">
          <input type="checkbox" defaultChecked className="block h-[14px] w-[14px] appearance-none border border-[#555] bg-white" />
          <svg className="pointer-events-none absolute inset-0" width="14" height="14" viewBox="0 0 14 14" fill="none" stroke="#3c9a1e" strokeWidth="2" aria-hidden="true">
            <path d="M3 7l3 3 5-6" />
          </svg>
        </span>
        Press &amp; Drag
      </label>
      <button aria-label="Filter" className="mr-[59px] ml-[17px] flex items-center gap-px">
        <svg width="17" height="15" viewBox="0 0 17 15" aria-hidden="true">
          <path d="M1 1h15l-5 6v6l-4 1V7z" fill="#d5d8dd" stroke="#333a48" />
          <path d="M3 2h11" stroke="#fff" />
        </svg>
        <span className="pt-1">:0</span>
      </button>
      <span className="flex items-end pr-[2px] pb-[2px]">
        <Grip />
      </span>
    </footer>
  );
}

/* Slice of another window showing past the right edge */
const fragments = ["", "t", "2", "a", "a", "n", "l", "l", "3", "2", "2", "l", "2", "2", "l", "l", "l", "l", "l", "l"];

function WindowBehind() {
  return (
    <div aria-hidden="true" className="flex w-[13px] shrink-0 flex-col overflow-hidden bg-[#3d87f5]">
      <div className="h-[22px]" />
      <div className="flex flex-1">
        <div className="flex w-[9px] flex-col border-t border-r border-l border-[#4a84c6] bg-[#6badf6]">
          <div className="h-5 w-[2px] bg-[#c75050]" />
          <div className="mt-2 flex-1 w-px bg-[#8f9aa8]" />
        </div>
        <div className="flex w-1 flex-col overflow-hidden text-[11px] text-[#777]">
          <div className="h-[454px] bg-linear-to-b from-[#2f7ff0] to-[#3f9af6]" />
          <div className="h-8 border-b border-[#cfcfcf] bg-[#f0f0f0] pt-3">v</div>
          <div className="flex-1 bg-white pt-[42px]">
            {fragments.map((f, i) => (
              <div key={i} className={`h-[21px] leading-5 ${i > 10 ? "text-[#a05a80]" : ""}`}>{f}</div>
            ))}
          </div>
        </div>
      </div>
    </div>
  );
}

export default function App() {
  return (
    <div className="flex min-h-screen bg-[#6badf6] font-['Noto_Sans','Open_Sans',sans-serif] text-black">
      <div className="relative flex min-w-0 flex-1 flex-col border-t border-l border-[#4a84c6]">
        <div className="-ml-px">
          <TitleBar />
        </div>
        <div className="mr-2 ml-[7px] flex flex-1 flex-col bg-[#f0f0f0]">
          <RibbonTabs />
          <Ribbon />
          <div className="mt-[2px] h-[33px] border-t border-b border-t-[#9a9a9a] border-b-[#9a9a9a] bg-[#dfe1e2]" />
          <div className="relative flex flex-1">
            <PropertiesPalette />
            <DrawingArea />
            <ProjectBrowser />
            <Callout />
          </div>
          <StatusBar />
        </div>
        <div className="h-[6px]" />
        <div className="flex h-[2px] bg-[#4a80b8] pl-[52px]">
          <span className="mt-px w-[38px] bg-[#9fc0e4]" />
          <span className="mt-px ml-1 w-[48px] bg-[#9fc0e4]" />
          <span className="mt-px ml-1 w-[42px] bg-white" />
        </div>
        <AppMenu />
      </div>
      <WindowBehind />
    </div>
  );
}
